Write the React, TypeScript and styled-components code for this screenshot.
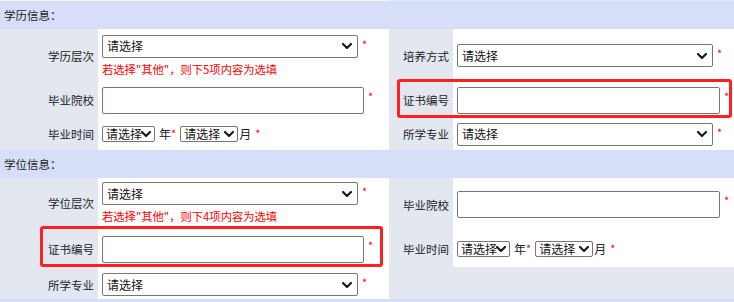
import styled, { createGlobalStyle } from "styled-components";

const GlobalStyle = createGlobalStyle`
  body {
    margin: 0;
    background: #ffffff;
    font-family: "Microsoft YaHei", "Noto Sans CJK SC", "Noto Sans", sans-serif;
    font-size: 11.5px;
    color: #222;
  }
`;

const OPTION = "请选择";

export default function App() {
  return (
    <Page>
      <GlobalStyle />
      <TopEdge />

      <SectionHeader>学历信息：</SectionHeader>
      <Section>
        <Half $labelWidth="98px" $rows="53px 36px 32px">
          <Label>学历层次</Label>
          <Value>
            <FieldLine>
              <Dropdown width={256} />
              <Star>*</Star>
            </FieldLine>
            <Hint>若选择"其他"，则下5项内容为选填</Hint>
          </Value>

          <Label>毕业院校</Label>
          <Value>
            <FieldLine>
              <TextInput $width="262px" />
              <Star>*</Star>
            </FieldLine>
          </Value>

          <Label>毕业时间</Label>
          <Value>
            <DateLine />
          </Value>
        </Half>

        <Half $labelWidth="64px" $rows="53px 36px 32px">
          <Label>培养方式</Label>
          <Value>
            <FieldLine>
              <Dropdown width={256} />
              <Star>*</Star>
            </FieldLine>
          </Value>

          <Label>证书编号</Label>
          <Value>
            <FieldLine>
              <TextInput $width="263px" />
              <Star>*</Star>
            </FieldLine>
          </Value>

          <Label>所学专业</Label>
          <Value>
            <FieldLine>
              <Dropdown width={256} />
              <Star>*</Star>
            </FieldLine>
          </Value>
        </Half>
      </Section>

      <SectionHeader>学位信息：</SectionHeader>
      <Section>
        <Half $labelWidth="98px" $rows="50px 42px 29px">
          <Label>学位层次</Label>
          <Value>
            <FieldLine>
              <Dropdown width={256} />
              <Star>*</Star>
            </FieldLine>
            <Hint>若选择"其他"，则下4项内容为选填</Hint>
          </Value>

          <Label>证书编号</Label>
          <Value>
            <FieldLine>
              <TextInput $width="262px" />
              <Star>*</Star>
            </FieldLine>
          </Value>

          <Label>所学专业</Label>
          <Value>
            <FieldLine>
              <Dropdown width={256} />
              <Star>*</Star>
            </FieldLine>
          </Value>
        </Half>

        <Half $labelWidth="64px" $rows="53px 36px 32px">
          <Label>毕业院校</Label>
          <Value>
            <FieldLine>
              <TextInput $width="263px" />
              <Star>*</Star>
            </FieldLine>
          </Value>

          <Label>毕业时间</Label>
          <Value>
            <DateLine />
          </Value>

          <EmptyCell />
        </Half>
      </Section>

      <BottomEdge />

      <Highlight $left={397} $top={79} $width={335} $height={39} />
      <Highlight $left={40} $top={226} $width={343} $height={41} />
    </Page>
  );
}

function Dropdown({ width, small = false }: { width: number; small?: boolean }) {
  return (
    <SelectWrap $small={small}>
      <Select $small={small} style={{ width }}>
        <option>{OPTION}</option>
      </Select>
      <Arrow viewBox="0 0 10 6" $small={small}>
        <polyline points="1,1 5,5 9,1" />
      </Arrow>
    </SelectWrap>
  );
}

function DateLine() {
  return (
    <DateRow>
      <Dropdown width={53} small />
      <Unit $gap={4}>年</Unit>
      <DateStar>*</DateStar>
      <Dropdown width={58} small />
      <Unit $gap={1}>月</Unit>
      <DateStar $gap={4}>*</DateStar>
    </DateRow>
  );
}

const Page = styled.div`
  position: relative;
  width: 734px;
  height: 302px;
  overflow: hidden;
`;

const TopEdge = styled.div`
  height: 1px;
  background: linear-gradient(to right, #f4f6fb 389px, #e2e7f0 389px);
`;

const SectionHeader = styled.div`
  height: 28px;
  line-height: 28px;
  padding-left: 4px;
  background: #d6dff7;
  color: #222;
`;

const BottomEdge = styled.div`
  height: 3px;
  background: #d6dff7;
`;

const Section = styled.div`
  display: grid;
  grid-template-columns: 389px 345px;
  height: 121px;
`;

const Half = styled.div<{ $labelWidth: string; $rows: string }>`
  display: grid;
  grid-template-columns: ${(p) => p.$labelWidth} 1fr;
  grid-template-rows: ${(p) => p.$rows};
`;

const Label = styled.div`
  display: flex;
  align-items: center;
  justify-content: flex-end;
  padding-right: 4px;
  background: #e2e7f0;
  color: #222;
  white-space: nowrap;
`;

const Value = styled.div`
  display: flex;
  flex-direction: column;
  justify-content: center;
  padding-left: 4px;
  background: #ffffff;
`;

const EmptyCell = styled.div`
  grid-column: 1 / span 2;
  background: #e2e7f0;
`;

const FieldLine = styled.div`
  display: flex;
  align-items: flex-start;
`;

const Star = styled.span`
  margin-top: 1px;
  margin-left: 4px;
  color: #ff0000;
  font-size: 11px;
  line-height: 16px;
`;

const DateRow = styled.div`
  display: flex;
  align-items: center;
  line-height: 16px;
  white-space: nowrap;
`;

const Unit = styled.span<{ $gap: number }>`
  margin-left: ${(p) => p.$gap}px;
  font-size: 12px;
  color: #222;
`;

const DateStar = styled.span<{ $gap?: number }>`
  align-self: flex-start;
  margin: -1px 4px 0 ${(p) => p.$gap ?? 0}px;
  color: #ff0000;
  font-size: 11px;
  line-height: 16px;
`;

const SelectWrap = styled.span<{ $small: boolean }>`
  position: relative;
  display: inline-flex;
  height: ${(p) => (p.$small ? "16px" : "23px")};
`;

const Select = styled.select<{ $small: boolean }>`
  box-sizing: border-box;
  height: 100%;
  margin: 0;
  padding: ${(p) => (p.$small ? "0 12px 0 3px" : "0 18px 0 4px")};
  border: 1px solid #767676;
  border-radius: 2px;
  background: #ffffff;
  color: #111;
  font-family: "Microsoft YaHei", "Noto Sans CJK SC", sans-serif;
  font-size: 12px;
  line-height: 1;
  appearance: none;
  -webkit-appearance: none;
  outline: none;
`;

const Arrow = styled.svg<{ $small: boolean }>`
  position: absolute;
  right: ${(p) => (p.$small ? "4px" : "6px")};
  top: 50%;
  width: 10px;
  height: 6px;
  transform: translateY(-50%);
  fill: none;
  stroke: #1a1a1a;
  stroke-width: 2.2;
  stroke-linecap: round;
  stroke-linejoin: round;
  pointer-events: none;
`;

const TextInput = styled.input<{ $width: string }>`
  box-sizing: border-box;
  width: ${(p) => p.$width};
  height: 27px;
  margin: 0;
  border: 1px solid #767676;
  border-radius: 2px;
  background: #ffffff;
`;

const Hint = styled.div`
  margin-top: 3px;
  color: #ff0000;
  font-size: 11.3px;
  line-height: 16px;
  white-space: nowrap;
`;

const Highlight = styled.div<{
  $left: number;
  $top: number;
  $width: number;
  $height: number;
}>`
  position: absolute;
  left: ${(p) => p.$left}px;
  top: ${(p) => p.$top}px;
  width: ${(p) => p.$width}px;
  height: ${(p) => p.$height}px;
  box-sizing: border-box;
  border: 3px solid #ff2020;
  border-radius: 3px;
  pointer-events: none;
`;
